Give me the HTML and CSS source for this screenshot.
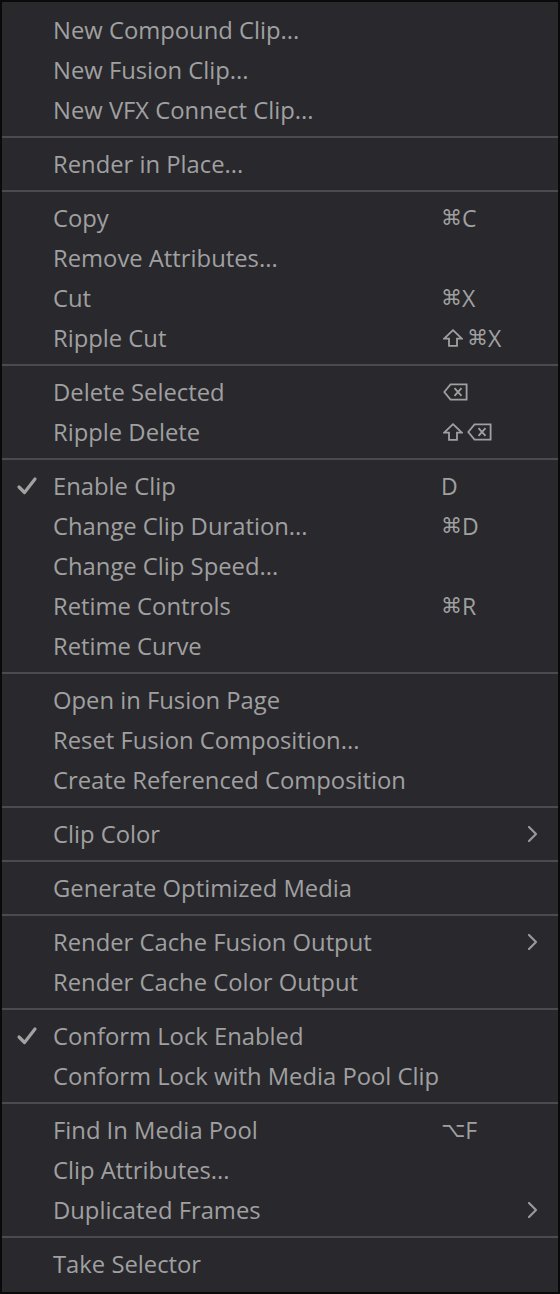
FILE: index.html
```html
<!DOCTYPE html>
<html>
<head>
<meta charset="utf-8">
<link rel="stylesheet" href="styles.css">
</head>
<body>
<div class="menu">
  <div class="item"><span class="check"></span><span class="label">New Compound Clip...</span></div>
  <div class="item"><span class="check"></span><span class="label">New Fusion Clip...</span></div>
  <div class="item"><span class="check"></span><span class="label">New VFX Connect Clip...</span></div>
  <div class="sep"></div>
  <div class="item"><span class="check"></span><span class="label">Render in Place...</span></div>
  <div class="sep"></div>
  <div class="item"><span class="check"></span><span class="label">Copy</span><span class="key"><span class="sym">⌘</span>C</span></div>
  <div class="item"><span class="check"></span><span class="label">Remove Attributes...</span></div>
  <div class="item"><span class="check"></span><span class="label">Cut</span><span class="key"><span class="sym">⌘</span>X</span></div>
  <div class="item"><span class="check"></span><span class="label">Ripple Cut</span><span class="key"><svg class="shift" viewBox="0 0 20 18" width="20" height="18"><path d="M10 1.2 L18.8 9.6 L14 9.6 L14 16.8 L6 16.8 L6 9.6 L1.2 9.6 Z" fill="none" stroke="#a0a0a0" stroke-width="1.8" stroke-linejoin="miter"/></svg><span class="sym">⌘</span>X</span></div>
  <div class="sep"></div>
  <div class="item"><span class="check"></span><span class="label">Delete Selected</span><span class="key"><svg class="bksp" viewBox="0 0 25 18" width="25" height="18"><path d="M1.3 9 L7.5 1.4 L23.6 1.4 L23.6 16.6 L7.5 16.6 Z" fill="none" stroke="#a0a0a0" stroke-width="1.8" stroke-linejoin="miter"/><path d="M11.5 5.2 L18.5 12.8 M18.5 5.2 L11.5 12.8" stroke="#a0a0a0" stroke-width="1.9" fill="none"/></svg></span></div>
  <div class="item"><span class="check"></span><span class="label">Ripple Delete</span><span class="key"><svg class="shift" viewBox="0 0 20 18" width="20" height="18"><path d="M10 1.2 L18.8 9.6 L14 9.6 L14 16.8 L6 16.8 L6 9.6 L1.2 9.6 Z" fill="none" stroke="#a0a0a0" stroke-width="1.8" stroke-linejoin="miter"/></svg><svg class="bksp" viewBox="0 0 25 18" width="25" height="18"><path d="M1.3 9 L7.5 1.4 L23.6 1.4 L23.6 16.6 L7.5 16.6 Z" fill="none" stroke="#a0a0a0" stroke-width="1.8" stroke-linejoin="miter"/><path d="M11.5 5.2 L18.5 12.8 M18.5 5.2 L11.5 12.8" stroke="#a0a0a0" stroke-width="1.9" fill="none"/></svg></span></div>
  <div class="sep"></div>
  <div class="item"><span class="check"><svg viewBox="0 0 22 22" width="22" height="22"><path d="M3 12 L8.5 17.5 L19 4" fill="none" stroke="#a2a2a2" stroke-width="3.2" stroke-linecap="round" stroke-linejoin="round"/></svg></span><span class="label">Enable Clip</span><span class="key">D</span></div>
  <div class="item"><span class="check"></span><span class="label">Change Clip Duration...</span><span class="key"><span class="sym">⌘</span>D</span></div>
  <div class="item"><span class="check"></span><span class="label">Change Clip Speed...</span></div>
  <div class="item"><span class="check"></span><span class="label">Retime Controls</span><span class="key"><span class="sym">⌘</span>R</span></div>
  <div class="item"><span class="check"></span><span class="label">Retime Curve</span></div>
  <div class="sep"></div>
  <div class="item"><span class="check"></span><span class="label">Open in Fusion Page</span></div>
  <div class="item"><span class="check"></span><span class="label">Reset Fusion Composition...</span></div>
  <div class="item"><span class="check"></span><span class="label">Create Referenced Composition</span></div>
  <div class="sep"></div>
  <div class="item"><span class="check"></span><span class="label">Clip Color</span><span class="arrow"><svg viewBox="0 0 14 18" width="14" height="18"><path d="M3 2 L10 9 L3 16" fill="none" stroke="#999" stroke-width="2.2" stroke-linecap="round" stroke-linejoin="round"/></svg></span></div>
  <div class="sep"></div>
  <div class="item"><span class="check"></span><span class="label">Generate Optimized Media</span></div>
  <div class="sep"></div>
  <div class="item"><span class="check"></span><span class="label">Render Cache Fusion Output</span><span class="arrow"><svg viewBox="0 0 14 18" width="14" height="18"><path d="M3 2 L10 9 L3 16" fill="none" stroke="#999" stroke-width="2.2" stroke-linecap="round" stroke-linejoin="round"/></svg></span></div>
  <div class="item"><span class="check"></span><span class="label">Render Cache Color Output</span></div>
  <div class="sep"></div>
  <div class="item"><span class="check"><svg viewBox="0 0 22 22" width="22" height="22"><path d="M3 12 L8.5 17.5 L19 4" fill="none" stroke="#a2a2a2" stroke-width="3.2" stroke-linecap="round" stroke-linejoin="round"/></svg></span><span class="label">Conform Lock Enabled</span></div>
  <div class="item"><span class="check"></span><span class="label">Conform Lock with Media Pool Clip</span></div>
  <div class="sep"></div>
  <div class="item"><span class="check"></span><span class="label">Find In Media Pool</span><span class="key"><span class="sym">⌥</span>F</span></div>
  <div class="item"><span class="check"></span><span class="label">Clip Attributes...</span></div>
  <div class="item"><span class="check"></span><span class="label">Duplicated Frames</span><span class="arrow"><svg viewBox="0 0 14 18" width="14" height="18"><path d="M3 2 L10 9 L3 16" fill="none" stroke="#999" stroke-width="2.2" stroke-linecap="round" stroke-linejoin="round"/></svg></span></div>
  <div class="sep"></div>
  <div class="item"><span class="check"></span><span class="label">Take Selector</span></div>
</div>
</body>
</html>
```
FILE: styles.css
```css
* { box-sizing: border-box; }
html, body { margin: 0; padding: 0; background: #000; }
.menu {
  width: 560px;
  height: 1294px;
  background: #28282d;
  border: 2px solid #0a0a0b;
  padding: 8px 0;
  display: flex;
  flex-direction: column;
  font-family: "Open Sans", "Noto Sans", sans-serif;
  font-size: 23.8px;
  color: #a0a0a0;
}
.item {
  height: 40px;
  display: flex;
  align-items: center;
  position: relative;
}
.check {
  width: 51px;
  flex: none;
  display: flex;
  justify-content: flex-start;
  padding-left: 14px;
  align-items: center;
}
.check svg { display: block; }
.label { flex: 1; white-space: nowrap; }
.key {
  position: absolute;
  left: 439px;
  top: 0;
  height: 40px;
  display: flex;
  align-items: center;
  font-family: "Open Sans", "DejaVu Sans", sans-serif;
  font-size: 23px;
  color: #a0a0a0;
  white-space: nowrap;
}
.sym {
  font-family: "DejaVu Sans", sans-serif;
  font-size: 21px;
}
.shift {
  display: block;
  margin-left: 2px;
  margin-right: 4px;
}
.bksp {
  display: block;
  margin-left: 2px;
}
.shift + .bksp { margin-left: 0; }
.arrow {
  position: absolute;
  left: 524px;
  top: 11px;
}
.arrow svg { display: block; }
.sep {
  height: 14px;
  display: flex;
  align-items: center;
}
.sep::before {
  content: "";
  display: block;
  width: 100%;
  height: 2px;
  background: #4a4b50;
}
```
